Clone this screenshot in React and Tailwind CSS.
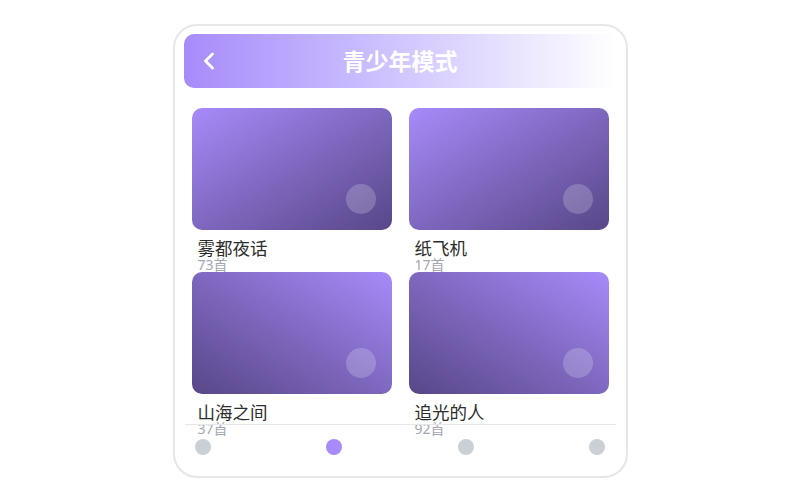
import React from 'react';
import { ChevronLeft } from 'lucide-react';

const albums = [
  { title: '雾都夜话', count: '73首', dir: 'br' },
  { title: '纸飞机', count: '17首', dir: 'br' },
  { title: '山海之间', count: '37首', dir: 'bl' },
  { title: '追光的人', count: '92首', dir: 'bl' },
];

const AlbumCard = ({ a }) => (
  <div className="flex flex-col">
    <div className={`relative h-[122px] rounded-[10px] ${a.dir === 'br' ? 'bg-gradient-to-br' : 'bg-gradient-to-bl'} from-[#a78bfa] to-[#584788]`}>
      <div className="absolute right-[16px] bottom-[16px] w-[30px] h-[30px] rounded-full bg-white/20" />
    </div>
    <div className="pl-[6px] pt-[8px]">
      <div className="text-[17.5px] leading-[20px] text-[#2d2d2d]">{a.title}</div>
      <div className="text-[14px] leading-[14px] text-[#a3a8b0]">{a.count}</div>
    </div>
  </div>
);

export default function App() {
  return (
    <div className="w-[800px] h-[500px] bg-white flex items-start justify-center pt-[24px]" style={{ fontFamily: '"Noto Sans", "Noto Sans CJK SC", sans-serif' }}>
      <div className="w-[455px] h-[454px] rounded-[24px] border-2 border-[#e5e7eb] bg-white px-[9px] pt-[8px] flex flex-col">
        <div className="relative h-[54px] rounded-[10px] bg-gradient-to-r from-[#a78bfa] to-white flex items-center justify-center">
          <ChevronLeft className="absolute left-[11px] text-white" size={28} strokeWidth={2.5} />
          <span className="text-white text-[23px] font-bold">青少年模式</span>
        </div>
        <div className="h-[336px] px-[8px] pt-[20px] grid grid-cols-2 gap-x-[17px] content-start">
          {albums.map(a => <AlbumCard key={a.title} a={a} />)}
        </div>
        <div className="border-t border-[#e5e7eb] mx-[1px] h-[44px] px-[10px] flex items-center justify-between">
          <span className="w-[16px] h-[16px] rounded-full bg-[#cbd0d6]" />
          <span className="w-[16px] h-[16px] rounded-full bg-[#a78bfa]" />
          <span className="w-[16px] h-[16px] rounded-full bg-[#cbd0d6]" />
          <span className="w-[16px] h-[16px] rounded-full bg-[#cbd0d6]" />
        </div>
      </div>
    </div>
  );
}
